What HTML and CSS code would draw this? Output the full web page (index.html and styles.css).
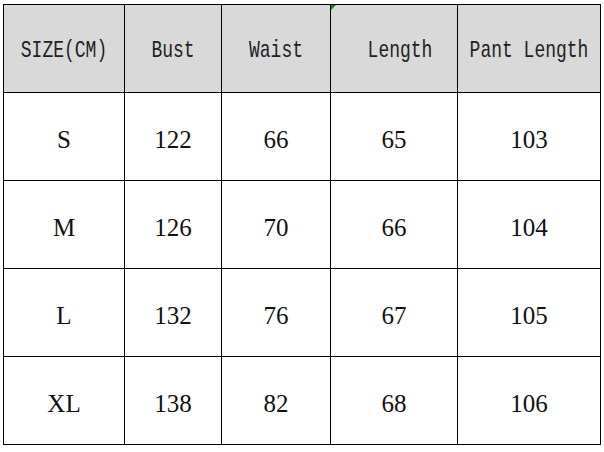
FILE: index.html
```html
<!DOCTYPE html>
<html>
<head>
<meta charset="utf-8">
<link rel="stylesheet" href="styles.css">
</head>
<body>
<div class="sheet">
  <div class="grid">
    <div class="cell head"><span class="mono">SIZE(CM)</span></div>
    <div class="cell head"><span class="mono">Bust</span></div>
    <div class="cell head"><span class="mono">Waist</span></div>
    <div class="cell head note"><span class="mono shift">Length</span></div>
    <div class="cell head"><span class="mono">Pant Length</span></div>

    <div class="cell">S</div><div class="cell">122</div><div class="cell">66</div><div class="cell">65</div><div class="cell">103</div>
    <div class="cell">M</div><div class="cell">126</div><div class="cell">70</div><div class="cell">66</div><div class="cell">104</div>
    <div class="cell">L</div><div class="cell">132</div><div class="cell">76</div><div class="cell">67</div><div class="cell">105</div>
    <div class="cell">XL</div><div class="cell">138</div><div class="cell">82</div><div class="cell">68</div><div class="cell">106</div>
  </div>
</div>
</body>
</html>
```

FILE: styles.css
```css
html, body {
  margin: 0;
  padding: 0;
  background: #ffffff;
}
.sheet {
  padding: 4px 0 0 3px;
}
.grid {
  display: grid;
  width: 598px;
  grid-template-columns: 120px 96px 108px 126px 142px;
  grid-template-rows: repeat(5, 87px);
  gap: 1px;
  padding: 1px;
  box-sizing: border-box;
  background: #000000;
}
.cell {
  position: relative;
  background: #ffffff;
  display: flex;
  align-items: center;
  justify-content: center;
  padding-top: 6px;
  box-sizing: border-box;
  font-family: "Liberation Serif", "Times New Roman", serif;
  font-size: 25px;
  color: #111111;
}
.head {
  background: #d9d9d9;
  padding-top: 3px;
}
.mono {
  display: inline-block;
  font-family: "Liberation Mono", "Courier New", monospace;
  font-size: 18px;
  transform: scaleY(1.3);
  color: #222222;
  white-space: pre;
}
.shift {
  margin-left: 12px;
}
.note::before {
  content: "";
  position: absolute;
  left: 0;
  top: 0;
  width: 0;
  height: 0;
  border-top: 5px solid #1f7a1f;
  border-right: 5px solid transparent;
}
```
